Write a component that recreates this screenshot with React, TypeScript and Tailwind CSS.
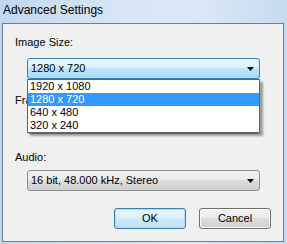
import React from "react";

const font = { fontFamily: '"Liberation Sans", Arial, sans-serif' };

const Arrow: React.FC = () => (
  <svg width="7" height="4" viewBox="0 0 7 4" className="shrink-0">
    <path d="M0 0h7L3.5 4z" fill="#000" />
  </svg>
);

interface ComboProps {
  value: string;
  open?: boolean;
}

const Combo: React.FC<ComboProps> = ({ value, open }) => (
  <div
    className={
      open
        ? "ml-[24px] w-[233px] h-[21px] flex items-center justify-between pl-[3px] pr-[5px] rounded-[3px] border border-[#3c7fb1] bg-[linear-gradient(to_bottom,#eaf6fd_0%,#d9f0fc_45%,#bee6fd_50%,#a7d9f5_100%)]"
        : "ml-[24px] w-[233px] h-[21px] flex items-center justify-between pl-[3px] pr-[5px] rounded-[3px] border border-[#8e8f8f] bg-[linear-gradient(to_bottom,#f2f2f2_0%,#ebebeb_45%,#dddddd_50%,#cfcfcf_100%)]"
    }
  >
    <span className="text-[11px] leading-[13px] text-black">{value}</span>
    <Arrow />
  </div>
);

const options = ["1920 x 1080", "1280 x 720", "640 x 480", "320 x 240"];

export default function App() {
  return (
    <div
      className="w-[287px] h-[244px] flex flex-col bg-[linear-gradient(to_right,#c2d7ee_0%,#d9e7f5_45%,#dbe8f6_70%,#c6daef_100%)] overflow-hidden"
      style={font}
    >
      {/* title bar */}
      <div className="h-[23px] pl-[3px] pt-[3px] text-[12px] leading-[14px] text-black">
        Advanced Settings
      </div>

      {/* client area */}
      <div className="ml-[2px] w-[282px] h-[219px] border border-[#6e7f92] bg-[#f0f0f0] relative flex flex-col">
        <div className="pl-[12px] pt-[12px] text-[11px] leading-[13px] text-black">Image Size:</div>
        <div className="mt-[9px]">
          <Combo value="1280 x 720" open />
        </div>

        <div className="pl-[12px] mt-[15px] text-[11px] leading-[13px] text-black">Frame Rate:</div>
        {/* frame rate combo, covered by the open list */}
        <div className="mt-[6px]">
          <Combo value="" />
        </div>

        <div className="pl-[12px] mt-[17px] text-[11px] leading-[13px] text-black">Audio:</div>
        <div className="mt-[6px]">
          <Combo value="16 bit, 48.000 kHz, Stereo" />
        </div>

        <div className="mt-[17px] flex justify-end gap-[13px] pr-[12px]">
          <button className="w-[72px] h-[21px] rounded-[3px] border border-[#3c7fb1] shadow-[inset_0_0_0_1px_#a8dcf7] bg-[linear-gradient(to_bottom,#eaf6fd_0%,#d9f0fc_45%,#cfe9f8_50%,#bfe0f3_100%)] text-[11px] leading-[13px] text-black">
            OK
          </button>
          <button className="w-[72px] h-[21px] rounded-[3px] border border-[#707070] shadow-[inset_0_0_0_1px_#fcfcfc] bg-[linear-gradient(to_bottom,#f2f2f2_0%,#ebebeb_45%,#dddddd_50%,#cfcfcf_100%)] text-[11px] leading-[13px] text-black">
            Cancel
          </button>
        </div>

        {/* open dropdown list */}
        <div className="absolute left-[24px] top-[55px] w-[233px] border border-[#646464] bg-white shadow-[3px_3px_2px_rgba(0,0,0,0.35)]">
          {options.map((o, i) => (
            <div
              key={o}
              className={
                i === 1
                  ? "h-[13px] pl-[2px] text-[11px] leading-[13px] bg-[#3399ff] text-white"
                  : "h-[13px] pl-[2px] text-[11px] leading-[13px] text-black"
              }
            >
              {o}
            </div>
          ))}
        </div>
      </div>
    </div>
  );
}
